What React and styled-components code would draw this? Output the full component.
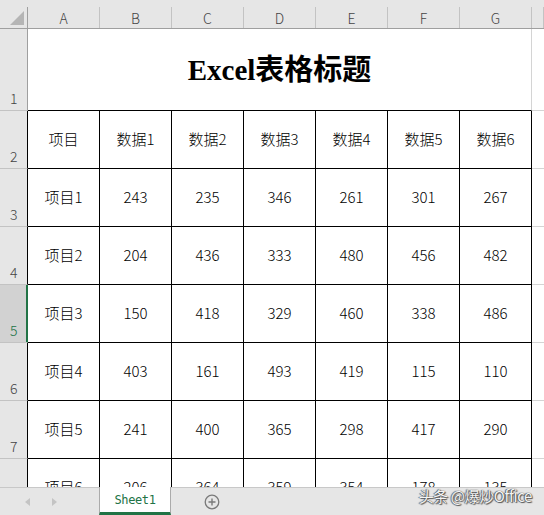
import React from 'react';
import styled, { createGlobalStyle } from 'styled-components';

const GlobalStyle = createGlobalStyle`
  html, body {
    margin: 0;
    padding: 0;
    background: #ffffff;
  }
  body {
    font-family: "Noto Sans CJK SC", "Noto Sans", sans-serif;
    overflow: hidden;
  }
`;

const Window = styled.div`
  position: relative;
  width: 544px;
  height: 515px;
  display: flex;
  flex-direction: column;
  overflow: hidden;
`;

const Sheet = styled.div`
  flex: 1;
  overflow: hidden;
  display: grid;
  grid-template-columns: 28px repeat(7, 72px) 1fr;
  grid-template-rows: 29px 82px repeat(7, 58px);
`;

const HeadCell = styled.div`
  background: #e6e6e6;
  border-bottom: 1px solid #9f9f9f;
  display: flex;
  align-items: flex-end;
`;

const HeadLabel = styled.div`
  flex: 1;
  height: 21px;
  display: flex;
  align-items: center;
  justify-content: center;
  border-right: 1px solid ${(p) => (p.$strong ? '#9f9f9f' : '#c3c3c3')};
  font-size: 14px;
  font-weight: 300;
  color: #444;
`;

const CornerMark = styled.div`
  width: 0;
  height: 0;
  margin: 0 3px 3px auto;
  border-style: solid;
  border-width: 0 0 14px 14px;
  border-color: transparent transparent #b5b5b5 transparent;
  align-self: flex-end;
`;

const RowHead = styled.div`
  background: ${(p) => (p.$active ? '#d2d2d2' : '#e6e6e6')};
  border-bottom: 1px solid #c3c3c3;
  border-right: 1px solid
    ${(p) => (p.$active ? '#217346' : p.$table ? '#000' : '#9f9f9f')};
  box-shadow: ${(p) => (p.$active ? 'inset -1px 0 0 #217346' : 'none')};
  display: flex;
  align-items: flex-end;
  padding: 0 0 4px 10px;
  font-size: 14px;
  font-weight: 300;
  line-height: 16px;
  color: ${(p) => (p.$active ? '#217346' : '#444')};
`;

const TitleCell = styled.div`
  grid-column: span 7;
  border-right: 1px solid #d4d4d4;
  border-bottom: 1px solid #000;
  display: flex;
  align-items: center;
  justify-content: center;
  padding-bottom: 5px;
  font-family: "Liberation Serif", "Noto Sans CJK SC", serif;
  font-weight: 700;
  font-size: 29px;
  color: #000;
`;

const Cell = styled.div`
  border-right: 1px solid #000;
  border-bottom: 1px solid #000;
  display: flex;
  align-items: center;
  justify-content: center;
  padding-bottom: 3px;
  font-size: 15px;
  font-weight: 300;
  color: #000;
`;

const Spare = styled.div`
  border-bottom: 1px solid #d4d4d4;
`;

const TabBar = styled.div`
  height: 28px;
  flex-shrink: 0;
  background: #e6e6e6;
  border-top: 1px solid #c8c8c8;
  box-sizing: border-box;
  display: grid;
  grid-template-columns: 99px 72px 84px 1fr;
  align-items: stretch;
`;

const NavArrows = styled.div`
  display: flex;
  align-items: center;
  gap: 22px;
  padding-left: 25px;
`;

const Arrow = styled.span`
  width: 0;
  height: 0;
  border-style: solid;
  border-width: 4px ${(p) => (p.$left ? '5px' : '0')} 4px ${(p) => (p.$left ? '0' : '5px')};
  border-color: transparent ${(p) => (p.$left ? '#c4c4c4' : 'transparent')} transparent
    ${(p) => (p.$left ? 'transparent' : '#c4c4c4')};
`;

const Tab = styled.div`
  background: #ffffff;
  border-left: 1px solid #ababab;
  border-right: 1px solid #ababab;
  border-bottom: 3px solid #217346;
  margin-top: -1px;
  display: flex;
  align-items: center;
  justify-content: center;
  padding-top: 1px;
  font-family: "DejaVu Sans Mono", "Liberation Mono", monospace;
  font-size: 12px;
  letter-spacing: -0.4px;
  color: #217346;
`;

const AddSlot = styled.div`
  display: flex;
  align-items: center;
  justify-content: center;
  padding-right: 2px;
`;

const Watermark = styled.div`
  position: absolute;
  right: 12px;
  bottom: 9px;
  font-size: 15px;
  color: #f4f4f4;
  letter-spacing: -0.4px;
  text-shadow: 0 0 1px #333, 1px 1px 1px #555, -1px 0 1px #666;
`;

const columns = ['A', 'B', 'C', 'D', 'E', 'F', 'G'];

const rows = [
  ['项目', '数据1', '数据2', '数据3', '数据4', '数据5', '数据6'],
  ['项目1', 243, 235, 346, 261, 301, 267],
  ['项目2', 204, 436, 333, 480, 456, 482],
  ['项目3', 150, 418, 329, 460, 338, 486],
  ['项目4', 403, 161, 493, 419, 115, 110],
  ['项目5', 241, 400, 365, 298, 417, 290],
  ['项目6', 206, 364, 359, 354, 178, 135],
];

const ACTIVE_ROW = 5;

const PlusIcon = () => (
  <svg width="16" height="16" viewBox="0 0 16 16">
    <circle cx="8" cy="8" r="6.8" fill="none" stroke="#7a7a7a" strokeWidth="1.3" />
    <path d="M8 4.5v7M4.5 8h7" stroke="#7a7a7a" strokeWidth="1.4" />
  </svg>
);

const App = () => {
  return (
    <Window>
      <GlobalStyle />
      <Sheet>
        {/* column headers */}
        <HeadCell>
          <HeadLabel $strong>
            <CornerMark />
          </HeadLabel>
        </HeadCell>
        {columns.map((c) => (
          <HeadCell key={c}>
            <HeadLabel>{c}</HeadLabel>
          </HeadCell>
        ))}
        <HeadCell>
          <HeadLabel />
        </HeadCell>

        {/* merged title row */}
        <RowHead>1</RowHead>
        <TitleCell>Excel表格标题</TitleCell>
        <Spare />

        {/* table rows */}
        {rows.map((row, i) => {
          const num = i + 2;
          return (
            <React.Fragment key={num}>
              <RowHead $table $active={num === ACTIVE_ROW}>
                {num}
              </RowHead>
              {row.map((value, j) => (
                <Cell key={j}>{value}</Cell>
              ))}
              <Spare />
            </React.Fragment>
          );
        })}
      </Sheet>

      <TabBar>
        <NavArrows>
          <Arrow $left />
          <Arrow />
        </NavArrows>
        <Tab>Sheet1</Tab>
        <AddSlot>
          <PlusIcon />
        </AddSlot>
        <div />
      </TabBar>

      <Watermark>头条 @爆炒Office</Watermark>
    </Window>
  );
};

export default App;
